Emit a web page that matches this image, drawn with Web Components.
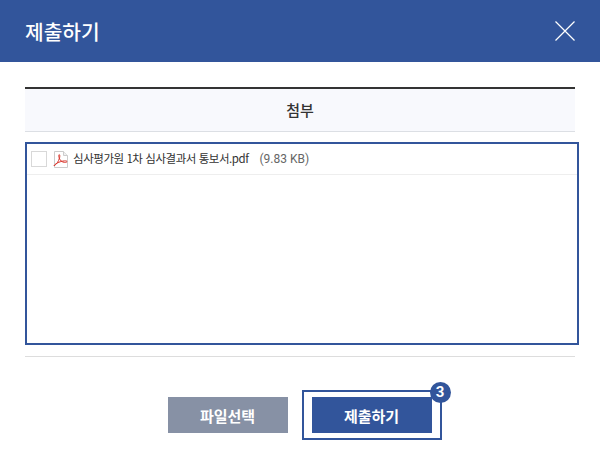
<!DOCTYPE html>
<html lang="ko"><head><meta charset="utf-8"><style>
html,body{margin:0;padding:0;background:#fff;font-family:"Noto Sans CJK KR","Noto Sans",sans-serif}
</style></head><body>
<submit-dialog></submit-dialog>
<script>
const F='"Noto Sans CJK KR","Noto Sans",sans-serif';
class DialogHeader extends HTMLElement{constructor(){super();this.attachShadow({mode:'open'}).innerHTML=`<style>
:host{display:flex;align-items:center;justify-content:space-between;height:62px;background:#32559b;color:#fff;padding:0 25px 0 25px;font:500 20.3px/1 ${F}}
svg{display:block}
</style><slot></slot><svg width="20" height="20" viewBox="0 0 20 20"><path d="M.5.5 19.5 19.5M19.5.5.5 19.5" stroke="#fff" stroke-width="1.2" fill="none"/></svg>`}}
customElements.define('dialog-header',DialogHeader);
class AttachTitle extends HTMLElement{constructor(){super();this.attachShadow({mode:'open'}).innerHTML=`<style>
:host{display:flex;align-items:center;justify-content:center;height:42px;background:#f8f9fd;border-top:2px solid #333;border-bottom:1px solid #dcdfe4;color:#333;font:500 15px/1 ${F}}
span{display:block;margin-top:-2px}
</style><span><slot></slot></span>`}}
customElements.define('attach-title',AttachTitle);
class FileRow extends HTMLElement{constructor(){super();this.attachShadow({mode:'open'}).innerHTML=`<style>
:host{display:flex;align-items:center;height:30px;padding:0 0 0 4px;border-bottom:1px solid #eee;font:400 11.5px/1 ${F};letter-spacing:-.45px;color:#333}
.cb{width:14px;height:14px;border:1px solid #d8d8d8;background:#fff;margin-right:6px;flex:none}
svg{display:block;margin-right:4px;flex:none}
.size{color:#666;margin-left:11px;letter-spacing:0;font-family:Roboto,"Noto Sans",sans-serif;font-size:12px}
</style><span class="cb"></span><svg width="16" height="17" viewBox="0 0 16 17"><path d="M1.5.5H10.5L14.5 4.5V16.5H1.5Z" fill="#fff" stroke="#ccc"/><path d="M10.5.5V4.5H14.5" fill="#f1f1f1" stroke="#ccc"/><path d="M1 14.8C3.5 13.5 5.6 10.5 6.6 6.6 6.9 5.3 6.9 3.8 6.3 3.6 5.6 3.6 5.7 5.5 6.3 7.2 7.2 9.5 9 11.2 11.5 11.4 13.2 11.5 14.2 11 14 10.4 13.7 9.8 12 9.7 9.8 10.1 7.3 10.6 4.4 11.6 2.6 13 1.6 13.8.9 14.7 1 14.8Z" fill="none" stroke="#d9352c" stroke-width="1"/></svg><span><slot></slot></span><span class="size"><slot name="size"></slot></span>`}}
customElements.define('file-row',FileRow);
class FileBox extends HTMLElement{constructor(){super();this.attachShadow({mode:'open'}).innerHTML=`<style>
:host{display:block;height:199px;margin:10px -4px 0 0;border:2px solid #32559b;background:#fff}
</style><slot></slot>`}}
customElements.define('file-box',FileBox);
class ActionButton extends HTMLElement{constructor(){super();this.attachShadow({mode:'open'}).innerHTML=`<style>
:host{display:flex;align-items:center;justify-content:center;width:120px;height:36px;color:#fff;font:700 15px/1 ${F};background:#8791a5}
:host([primary]){background:#32559b}
</style><slot></slot>`}}
customElements.define('action-button',ActionButton);
class FocusRing extends HTMLElement{constructor(){super();this.attachShadow({mode:'open'}).innerHTML=`<style>
:host{display:block;position:relative;padding:5px 8px;border:2px solid #32559b;margin-left:14px}
.badge{position:absolute;top:-10px;right:-11px;width:21px;height:21px;border-radius:50%;background:#32559b;color:#fff;font:700 15px/21px Roboto,sans-serif;text-align:center}
</style><slot></slot><span class="badge">3</span>`}}
customElements.define('focus-ring',FocusRing);
class SubmitDialog extends HTMLElement{constructor(){super();this.attachShadow({mode:'open'}).innerHTML=`<style>
:host{display:block;width:600px;height:467px;background:#fff;overflow:hidden}
main{padding:25px 25px 0 25px}
hr{border:0;border-top:1px solid #ddd;margin:11px 0 0}
.actions{display:flex;justify-content:center;align-items:center;margin-top:33px;padding-left:9px}
</style><dialog-header>제출하기</dialog-header><main><attach-title>첨부</attach-title><file-box><file-row>심사평가원 1차 심사결과서 통보서.pdf<span slot="size">(9.83 KB)</span></file-row></file-box><hr><div class="actions"><action-button>파일선택</action-button><focus-ring><action-button primary>제출하기</action-button></focus-ring></div></main>`}}
customElements.define('submit-dialog',SubmitDialog);
</script></body></html>
